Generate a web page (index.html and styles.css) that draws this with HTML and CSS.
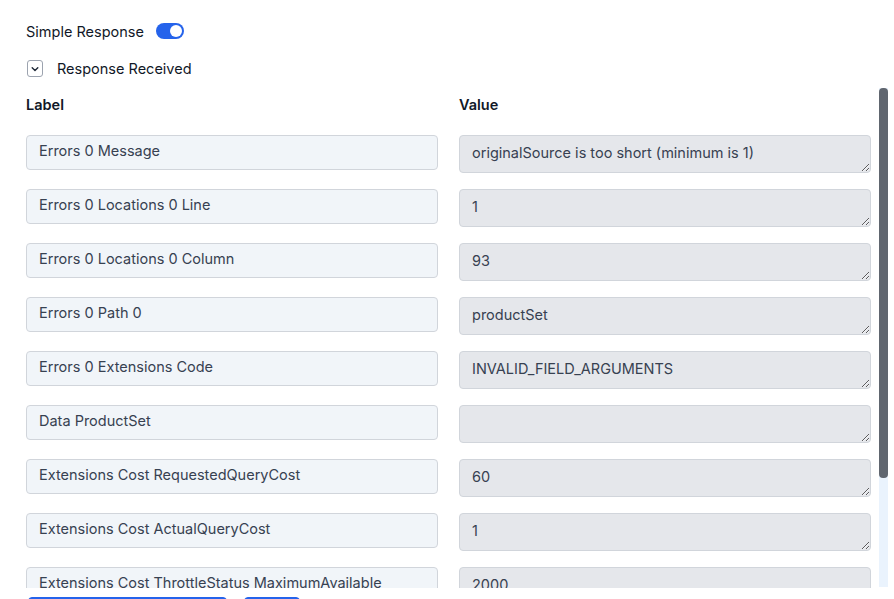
FILE: index.html
```html
<!DOCTYPE html>
<html>
<head>
<meta charset="utf-8">
<link rel="stylesheet" href="styles.css">
</head>
<body>
<div class="page">
  <div class="top-row">
    <span class="top-label">Simple Response</span>
    <span class="toggle"><span class="knob"></span></span>
  </div>
  <div class="collapse-row">
    <span class="chev-box">
      <svg width="10" height="10" viewBox="0 0 10 10"><path d="M2.2 3.8 L5 6.6 L7.8 3.8" fill="none" stroke="#1f2937" stroke-width="1.4" stroke-linecap="round" stroke-linejoin="round"/></svg>
    </span>
    <span class="collapse-label">Response Received</span>
  </div>
  <div class="scroll-wrap">
    <div class="scroller">
      <div class="grid">
        <div class="col-head">Label</div>
        <div class="col-head">Value</div>

        <input class="lbl" readonly value="Errors 0 Message">
        <textarea class="val" readonly>originalSource is too short (minimum is 1)</textarea>

        <input class="lbl" readonly value="Errors 0 Locations 0 Line">
        <textarea class="val" readonly>1</textarea>

        <input class="lbl" readonly value="Errors 0 Locations 0 Column">
        <textarea class="val" readonly>93</textarea>

        <input class="lbl" readonly value="Errors 0 Path 0">
        <textarea class="val" readonly>productSet</textarea>

        <input class="lbl" readonly value="Errors 0 Extensions Code">
        <textarea class="val" readonly>INVALID_FIELD_ARGUMENTS</textarea>

        <input class="lbl" readonly value="Data ProductSet">
        <textarea class="val" readonly></textarea>

        <input class="lbl" readonly value="Extensions Cost RequestedQueryCost">
        <textarea class="val" readonly>60</textarea>

        <input class="lbl" readonly value="Extensions Cost ActualQueryCost">
        <textarea class="val" readonly>1</textarea>

        <input class="lbl" readonly value="Extensions Cost ThrottleStatus MaximumAvailable">
        <textarea class="val" readonly>2000</textarea>

        <input class="lbl" readonly value="Extensions Cost ThrottleStatus CurrentlyAvailable">
        <textarea class="val" readonly>1999</textarea>

        <input class="lbl" readonly value="Extensions Cost ThrottleStatus RestoreRate">
        <textarea class="val" readonly>100</textarea>
      </div>
    </div>
    <div class="fake-track"><div class="fake-thumb"></div></div>
  </div>
  <div class="actions">
    <button class="btn btn-primary"></button>
    <button class="btn btn-secondary"></button>
  </div>
</div>
</body>
</html>
```

FILE: styles.css
```css
html, body {
  margin: 0;
  padding: 0;
  height: 100%;
  overflow: hidden;
  background: #ffffff;
}

body {
  font-family: "Inter", "Noto Sans", sans-serif;
  font-size: 14.5px;
  color: #111827;
}

.page {
  padding-left: 26px;
}

.top-row {
  display: flex;
  align-items: center;
  padding-top: 23px;
  height: 16px;
}

.top-label {
  font-size: 14.5px;
  color: #111827;
}

.toggle {
  display: inline-flex;
  align-items: center;
  justify-content: flex-end;
  margin-left: 12px;
  width: 28px;
  height: 16px;
  border-radius: 8px;
  background: #2563eb;
  box-sizing: border-box;
  padding-right: 2px;
}

.knob {
  width: 12px;
  height: 12px;
  border-radius: 50%;
  background: #ffffff;
}

.collapse-row {
  display: flex;
  align-items: center;
  margin-top: 21px;
  height: 17px;
}

.chev-box {
  display: inline-flex;
  align-items: center;
  justify-content: center;
  width: 16px;
  height: 17px;
  box-sizing: border-box;
  border: 1px solid #9ca3af;
  border-radius: 3px;
  margin-left: 1px;
}

.collapse-label {
  margin-left: 14px;
  font-size: 14.5px;
  color: #111827;
}

.scroll-wrap {
  position: relative;
  margin-top: 11px;
  width: 862px;
  height: 500px;
}

.scroller {
  width: 100%;
  height: 100%;
  overflow-y: scroll;
  scrollbar-width: none;
}

.scroller::-webkit-scrollbar {
  display: none;
}

.fake-track {
  position: absolute;
  top: 0;
  right: 0;
  width: 9px;
  height: 499px;
  background: #eaf3fd;
}

.fake-thumb {
  width: 9px;
  height: 390px;
  border-radius: 4px;
  background: #60666f;
}

.grid {
  display: grid;
  grid-template-columns: 412px 412px;
  column-gap: 21px;
  row-gap: 16px;
  align-items: start;
  padding-top: 8px;
  padding-bottom: 8px;
}

.col-head {
  font-weight: 600;
  font-size: 14.5px;
  line-height: 17px;
  color: #111827;
  margin-bottom: 6px;
}

.lbl {
  box-sizing: border-box;
  width: 412px;
  height: 35px;
  margin: 0;
  padding: 0 12px 4px;
  border: 1px solid #d1d5db;
  border-radius: 4px;
  background: #f1f5f9;
  font-family: "Inter", "Noto Sans", sans-serif;
  font-size: 14.5px;
  color: #374151;
  outline: none;
}

.val {
  box-sizing: border-box;
  display: block;
  width: 412px;
  height: 38px;
  margin: 0;
  padding: 7px 12px;
  border: 1px solid #d1d5db;
  border-radius: 4px;
  background: #e5e7eb;
  font-family: "Inter", "Noto Sans", sans-serif;
  font-size: 14.5px;
  line-height: 20px;
  color: #374151;
  resize: vertical;
  outline: none;
  overflow: hidden;
}

.actions {
  display: flex;
  gap: 17px;
  margin-top: 9px;
  padding-left: 2px;
}

.btn {
  height: 36px;
  border-radius: 4px;
  font-family: "Inter", "Noto Sans", sans-serif;
  font-size: 14px;
}

.btn-primary {
  width: 199px;
  border: 1px solid #2563eb;
  background: #2563eb;
}

.btn-secondary {
  width: 56px;
  border: 1px solid #2563eb;
  background: #2563eb;
}
```
